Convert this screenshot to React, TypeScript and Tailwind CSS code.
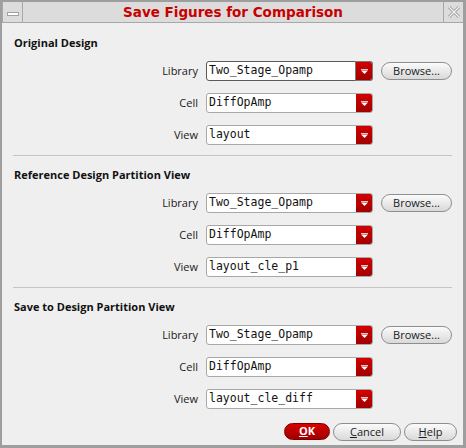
import React from 'react';

const sans = { fontFamily: '"Open Sans", "Noto Sans", sans-serif' };
const mono = { fontFamily: '"DejaVu Sans Mono", monospace' };

type Row = { label: string; value: string; browse?: boolean; focused?: boolean };

const sections: { title: string; rows: Row[] }[] = [
  {
    title: 'Original Design',
    rows: [
      { label: 'Library', value: 'Two_Stage_Opamp', browse: true, focused: true },
      { label: 'Cell', value: 'DiffOpAmp' },
      { label: 'View', value: 'layout' },
    ],
  },
  {
    title: 'Reference Design Partition View',
    rows: [
      { label: 'Library', value: 'Two_Stage_Opamp', browse: true },
      { label: 'Cell', value: 'DiffOpAmp' },
      { label: 'View', value: 'layout_cle_p1' },
    ],
  },
  {
    title: 'Save to Design Partition View',
    rows: [
      { label: 'Library', value: 'Two_Stage_Opamp', browse: true },
      { label: 'Cell', value: 'DiffOpAmp' },
      { label: 'View', value: 'layout_cle_diff' },
    ],
  },
];

function Combo({ value, focused }: { value: string; focused?: boolean }) {
  return (
    <div
      className={`flex h-[20px] w-[167px] items-stretch rounded-[3px] border bg-white ${
        focused ? 'border-[#5a5a5a]' : 'border-[#a8a8a8]'
      }`}
    >
      <div className="flex flex-1 items-center pl-[2px] text-[11.5px] text-[#111]" style={mono}>
        {value}
      </div>
      <div
        className={`flex w-[16px] items-center justify-center rounded-r-[2px] bg-gradient-to-b from-[#d20000] to-[#a30000] ${
          focused ? 'outline outline-1 outline-[#7a7a7a]' : ''
        }`}
      >
        <svg width="7" height="5" viewBox="0 0 7 5">
          <rect x="0" y="0" width="7" height="1" fill="#f4c4c4" />
          <polygon points="0,1.5 7,1.5 3.5,5" fill="#ffffff" />
        </svg>
      </div>
    </div>
  );
}

function PillButton({ children, className = '' }: { children: React.ReactNode; className?: string }) {
  return (
    <div
      className={`flex h-[18px] items-center justify-center rounded-full border border-[#8e8e8e] bg-gradient-to-b from-[#fbfbfb] to-[#d9d9d9] text-[11px] text-[#1a1a1a] ${className}`}
      style={sans}
    >
      {children}
    </div>
  );
}

export default function App() {
  return (
    <div className="flex h-[448px] w-[466px] flex-col border-t-2 border-r-[3px] border-b-[3px] border-l-2 border-[#9e9e9e] bg-[#efefef]">
      <div className="flex h-[21px] gap-[1px] border-b border-[#a8a8a8] bg-[#a8a8a8] pl-[1px]">
        <div className="flex w-[19px] items-center justify-center bg-[#dcdcdc]">
          <div className="mt-[3px] h-[4px] w-[12px] border border-[#a0a0a0] bg-white" />
        </div>
        <div
          className="flex flex-1 items-center justify-center bg-[#dcdcdc] text-[13.5px] font-bold text-[#c80000]"
          style={{ fontFamily: '"DejaVu Sans", sans-serif' }}
        >
          Save Figures for Comparison
        </div>
        <div className="flex w-[19px] items-center justify-center bg-[#dcdcdc]">
          <svg width="14" height="14" viewBox="0 0 14 14">
            <path d="M2 2 L12 12 M12 2 L2 12" stroke="#9a9a9a" strokeWidth="3" />
            <path d="M2 2 L12 12 M12 2 L2 12" stroke="#f4f4f4" strokeWidth="1.2" />
          </svg>
        </div>
      </div>

      <div className="flex flex-1 flex-col px-[11px]">
        {sections.map((s, i) => (
          <section
            key={s.title}
            className={i === 0 ? 'pt-[13px] pb-[10px]' : 'border-t border-[#c4c4c4] pt-[12px] pb-[10px]'}
          >
            <h2 className="pl-[1px] text-[11px] leading-[14px] font-bold text-[#111]" style={sans}>
              {s.title}
            </h2>
            <div className="mt-[11px] flex flex-col gap-[12px]">
              {s.rows.map((r) => (
                <div key={r.label} className="flex h-[20px] items-center gap-[8px]">
                  <span className="w-[185px] text-right text-[11px] text-[#1a1a1a]" style={sans}>
                    {r.label}
                  </span>
                  <Combo value={r.value} focused={r.focused} />
                  {r.browse && <PillButton className="w-[71px]">Browse...</PillButton>}
                </div>
              ))}
            </div>
          </section>
        ))}
      </div>

      <div className="flex justify-end gap-[3px] pr-[6px] pb-[4px]">
        <div
          className="flex h-[17px] w-[46px] items-center justify-center rounded-full border border-[#7a0000] bg-gradient-to-b from-[#d80000] to-[#a00000] text-[11px] font-bold text-white"
          style={sans}
        >
          <span><span className="underline">O</span>K</span>
        </div>
        <PillButton className="h-[17px] w-[68px]">
          <span><span className="underline">C</span>ancel</span>
        </PillButton>
        <PillButton className="h-[17px] w-[53px]">
          <span><span className="underline">H</span>elp</span>
        </PillButton>
      </div>
    </div>
  );
}
